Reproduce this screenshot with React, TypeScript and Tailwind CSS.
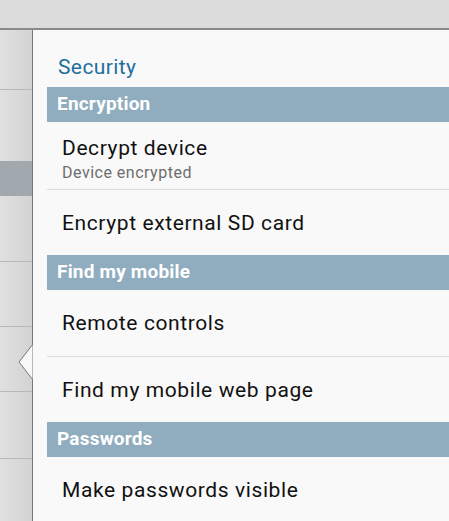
import React from 'react';

function Header({ title }: { title: string }) {
  return (
    <div className="flex h-[35px] items-center bg-[#8fadbf] pl-[10px] text-[19px] font-bold tracking-[0.2px] text-white">
      {title}
    </div>
  );
}

function Item({ title, sub, divider, h }: { title: string; sub?: string; divider?: boolean; h: string }) {
  return (
    <div
      className={`flex ${h} flex-col pl-[15px] ${sub ? 'pt-[12px]' : 'justify-center'} ${
        divider ? 'border-b border-[#dcdcdc]' : ''
      }`}
    >
      <div className={`text-[21px] tracking-[0.6px] text-[#111] ${sub ? 'leading-[28px]' : 'leading-[26px]'}`}>{title}</div>
      {sub && <div className="mt-[1px] text-[16px] leading-[20px] tracking-[0.5px] text-[#6e6e6e]">{sub}</div>}
    </div>
  );
}

export default function App() {
  return (
    <div className="flex h-[521px] w-[449px] flex-col overflow-hidden bg-[#dcdcdc]" style={{ fontFamily: 'Roboto, sans-serif' }}>
      <div className="h-[30px] shrink-0 border-b-2 border-[#8a8a8a] bg-[#dcdcdc]" />
      <div className="flex flex-1">
        <div className="flex w-[32px] shrink-0 flex-col bg-gradient-to-r from-[#e0e0e0] to-[#d3d3d3]">
          <div className="h-[60px] border-b border-[#b8b8b8]" />
          <div className="h-[71px]" />
          <div className="h-[35px] bg-[#a1a9ae]" />
          <div className="h-[66px] border-b border-[#b8b8b8]" />
          <div className="h-[65px] border-b border-[#b8b8b8]" />
          <div className="h-[65px] border-b border-[#b8b8b8]" />
          <div className="h-[67px] border-b border-[#b8b8b8]" />
        </div>
        <div className="relative flex-1 border-l border-[#777] bg-[#f9f9f9] pl-[14px]">
          <svg className="absolute left-[-15px] top-[314px]" width="16" height="38" viewBox="0 0 16 38">
            <polygon points="15,0 1,18 15,36" fill="#f9f9f9" stroke="#777" strokeWidth="1" />
            <rect x="15" y="-1" width="2" height="40" fill="#f9f9f9" />
          </svg>
          <div className="flex h-[57px] items-center pl-[11px] pt-[18px] text-[21px] tracking-[0.4px] text-[#1e6f9c]">Security</div>
          <Header title="Encryption" />
          <Item title="Decrypt device" sub="Device encrypted" divider h="h-[68px]" />
          <Item title="Encrypt external SD card" h="h-[65px]" />
          <Header title="Find my mobile" />
          <Item title="Remote controls" divider h="h-[67px]" />
          <Item title="Find my mobile web page" h="h-[65px]" />
          <Header title="Passwords" />
          <Item title="Make passwords visible" h="h-[66px]" />
        </div>
      </div>
    </div>
  );
}
